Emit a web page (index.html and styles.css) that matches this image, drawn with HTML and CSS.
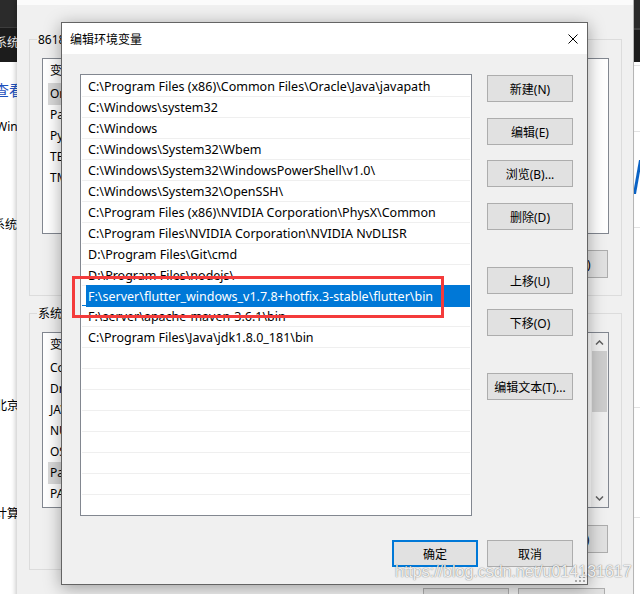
FILE: index.html
```html
<!DOCTYPE html>
<html lang="zh-CN">
<head>
<meta charset="utf-8">
<title>编辑环境变量</title>
<link rel="stylesheet" href="styles.css">
</head>
<body>
<div class="win-left">
  <div class="wl-title"><span>系统</span></div>
  <div class="wl-body">
    <div class="wl-link">查看有关计算机的基本信息</div>
    <div class="wl-text wl-win">Windows 版本</div>
    <div class="wl-text wl-sys">系统</div>
    <div class="wl-text wl-bj">北京</div>
    <div class="wl-text wl-js">计算机名</div>
  </div>
</div>

<div class="win-right">
  <div class="wr-title"></div>
  <div class="wr-line wr-l1"></div>
  <div class="wr-line wr-l2"></div>
  <svg class="wr-logo" width="8" height="34" viewBox="0 0 8 34"><polygon points="5,0 8,0 2,34 -1,34" fill="#0b63c5"/></svg>
  <div class="wr-line wr-l3"></div>
  <div class="wr-line wr-l4"></div>
  <div class="wr-line wr-l5"></div>
</div>

<div class="win-env">
  <div class="env-cap"></div>
  <div class="env-body">
    <div class="group g1">
      <div class="group-label">86180 的用户变量(U)</div>
      <div class="vlist">
        <div class="vhead">变量</div>
        <div class="vrow sel"><span>OneDrive</span></div>
        <div class="vrow"><span>Path</span></div>
        <div class="vrow"><span>PyCharm</span></div>
        <div class="vrow"><span>TEMP</span></div>
        <div class="vrow"><span>TMP</span></div>
      </div>
      <div class="gbtns g1-btns">
        <button class="gbtn">新建(N)...</button>
        <button class="gbtn">编辑(E)...</button>
        <button class="gbtn">删除(D)</button>
      </div>
    </div>
    <div class="group g2">
      <div class="group-label">系统变量(S)</div>
      <div class="vlist l2">
        <div class="vcol">
          <div class="vhead">变量</div>
          <div class="vrow"><span>ComSpec</span></div>
          <div class="vrow"><span>DriverData</span></div>
          <div class="vrow"><span>JAVA_HOME</span></div>
          <div class="vrow"><span>NUMBER_OF_PROCESSORS</span></div>
          <div class="vrow"><span>OS</span></div>
          <div class="vrow sel"><span>Path</span></div>
          <div class="vrow"><span>PATHEXT</span></div>
        </div>
        <div class="vscroll">
          <div class="sb-arrow"><svg width="9" height="5" viewBox="0 0 9 5"><path d="M1 4.5 L4.5 1 L8 4.5" fill="none" stroke="#606060" stroke-width="1.5"/></svg></div>
          <div class="sb-thumb"></div>
          <div class="sb-track"></div>
          <div class="sb-arrow"><svg width="9" height="5" viewBox="0 0 9 5"><path d="M1 0.5 L4.5 4 L8 0.5" fill="none" stroke="#606060" stroke-width="1.5"/></svg></div>
        </div>
      </div>
      <div class="gbtns g2-btns">
        <button class="gbtn">新建(W)...</button>
        <button class="gbtn">编辑(I)...</button>
        <button class="gbtn">删除(L)</button>
      </div>
    </div>
    <div class="env-foot">
      <button class="gbtn fbtn">确定</button>
      <button class="gbtn fbtn fbtn2">取消</button>
    </div>
  </div>
</div>

<div class="dlg">
  <div class="dlg-title">
    <span>编辑环境变量</span>
    <svg class="close" width="10" height="10" viewBox="0 0 10 10"><path d="M0.5 0.5 L9.5 9.5 M9.5 0.5 L0.5 9.5" stroke="#000" stroke-width="1"/></svg>
  </div>
  <div class="dlg-body">
    <div class="dlg-main">
      <div class="plist">
        <div class="prow"><div class="pt">C:\Program Files (x86)\Common Files\Oracle\Java\javapath</div></div>
        <div class="prow"><div class="pt">C:\Windows\system32</div></div>
        <div class="prow"><div class="pt">C:\Windows</div></div>
        <div class="prow"><div class="pt">C:\Windows\System32\Wbem</div></div>
        <div class="prow"><div class="pt">C:\Windows\System32\WindowsPowerShell\v1.0\</div></div>
        <div class="prow"><div class="pt">C:\Windows\System32\OpenSSH\</div></div>
        <div class="prow"><div class="pt">C:\Program Files (x86)\NVIDIA Corporation\PhysX\Common</div></div>
        <div class="prow"><div class="pt">C:\Program Files\NVIDIA Corporation\NVIDIA NvDLISR</div></div>
        <div class="prow"><div class="pt">D:\Program Files\Git\cmd</div></div>
        <div class="prow"><div class="pt">D:\Program Files\nodejs\</div></div>
        <div class="prow sel"><div class="pt">F:\server\flutter_windows_v1.7.8+hotfix.3-stable\flutter\bin</div></div>
        <div class="prow"><div class="pt">F:\server\apache-maven-3.6.1\bin</div></div>
        <div class="prow"><div class="pt">C:\Program Files\Java\jdk1.8.0_181\bin</div></div>
        <div class="prow"><div class="pt"></div></div>
        <div class="prow"><div class="pt"></div></div>
        <div class="prow"><div class="pt"></div></div>
        <div class="prow"><div class="pt"></div></div>
        <div class="prow"><div class="pt"></div></div>
        <div class="prow"><div class="pt"></div></div>
        <div class="prow"><div class="pt"></div></div>
        <div class="prow"><div class="pt"></div></div>
      </div>
      <div class="side">
        <button class="btn b-first">新建(N)</button>
        <button class="btn b-16">编辑(E)</button>
        <button class="btn b-15">浏览(B)...</button>
        <button class="btn b-16">删除(D)</button>
        <button class="btn b-37">上移(U)</button>
        <button class="btn b-15">下移(O)</button>
        <button class="btn b-37">编辑文本(T)...</button>
      </div>
    </div>
    <div class="dlg-foot">
      <button class="btn ok">确定</button>
      <button class="btn">取消</button>
    </div>
  </div>
  <svg class="grip" width="10" height="10" viewBox="0 0 10 10">
    <rect x="8" y="0" width="2" height="2" fill="#a8a8a8"/>
    <rect x="8" y="4" width="2" height="2" fill="#a8a8a8"/>
    <rect x="4" y="4" width="2" height="2" fill="#a8a8a8"/>
    <rect x="8" y="8" width="2" height="2" fill="#a8a8a8"/>
    <rect x="4" y="8" width="2" height="2" fill="#a8a8a8"/>
    <rect x="0" y="8" width="2" height="2" fill="#a8a8a8"/>
  </svg>
</div>

<div class="mark"></div>
<div class="wm">https://blog.csdn.net/u014131617</div>
</body>
</html>
```

FILE: styles.css
```css
* { box-sizing: border-box; }
html, body { margin: 0; padding: 0; }
body {
  width: 640px;
  height: 594px;
  overflow: hidden;
  position: relative;
  background: #f0f0f0;
  font-family: "Noto Sans", "Noto Sans CJK SC", sans-serif;
  font-size: 12px;
  color: #000;
}
button {
  font-family: inherit;
  font-size: 12px;
  color: #000;
  padding: 0;
  margin: 0;
}

/* left background window */
.win-left {
  position: absolute;
  left: -183px;
  top: 0;
  width: 200px;
  height: 594px;
  background: #fff;
  overflow: hidden;
  white-space: nowrap;
}
.wl-title {
  height: 62px;
  background: linear-gradient(#2b2b2b 0 27px, #3d3d3d 27px 28px, #1c1c1c 28px);
  color: #e8e8e8;
  padding: 35px 0 0 178px;
  line-height: 16px;
}
.wl-body { padding-left: 177px; }
.wl-link {
  margin-top: 18px;
  font-size: 15px;
  line-height: 20px;
  color: #1f52bd;
}
.wl-text { line-height: 18px; }
.wl-win { margin-top: 18px; margin-left: 2px; }
.wl-sys { margin-top: 80px; margin-left: -1px; }
.wl-bj { margin-top: 163px; margin-left: 1px; }
.wl-js { margin-top: 90px; margin-left: 1px; }

/* right background window */
.win-right {
  position: absolute;
  left: 633px;
  top: 0;
  width: 200px;
  height: 594px;
  background: #fff;
  border-left: 1px solid #b9b9b9;
  box-shadow: -4px 0 6px rgba(0, 0, 0, 0.06);
}
.wr-title {
  height: 62px;
  background: linear-gradient(#2b2b2b 0 28px, #404040 28px 30px, #1c1c1c 30px);
}
.wr-line { border-top: 1px solid #e3e3e3; }
.wr-l1 { margin-top: 3px; }
.wr-l2 { margin-top: 65px; }
.wr-logo { display: block; margin-top: 28px; }
.wr-l3 { margin-top: 33px; }
.wr-l4 { margin-top: 179px; }
.wr-l5 { margin-top: 109px; }

/* environment variables window (behind) */
.win-env {
  position: absolute;
  left: 17px;
  top: 0;
  width: 616px;
  height: 620px;
  background: #f0f0f0;
  box-shadow: -2px 0 4px rgba(0, 0, 0, 0.18);
  white-space: nowrap;
}
.env-cap { height: 5px; background: #fbfbfb; }
.env-body { padding: 0 11px 0 12px; }
.group {
  border: 1px solid #dcdcdc;
  padding: 0 12px 16px;
}
.g1 { margin-top: 34px; padding-bottom: 17px; }
.g2 { margin-top: 17px; }
.group-label {
  width: max-content;
  margin: -9px 0 0 -5px;
  padding: 0 1px;
  background: #f0f0f0;
  line-height: 17px;
}
.vlist {
  margin-top: 10px;
  height: 176px;
  background: #fff;
  border: 1px solid #828790;
  overflow: hidden;
}
.vhead {
  height: 24px;
  padding: 2px 0 0 7px;
  line-height: 20px;
}
.vrow {
  height: 21px;
  line-height: 21px;
  padding-left: 5px;
}
.vrow span { display: block; width: 180px; padding-left: 2px; }
.vrow.sel span { background: #d9d9d9; height: 22px; }
.l2 { display: flex; }
.vcol { flex: 1; }
.vscroll {
  width: 17px;
  background: #f0f0f0;
  display: flex;
  flex-direction: column;
}
.sb-arrow {
  height: 18px;
  display: flex;
  align-items: center;
  justify-content: center;
}
.sb-thumb { height: 61px; margin: 0 1px; background: #cdcdcd; }
.sb-track { flex: 1; }
.gbtns {
  display: flex;
  justify-content: flex-end;
  gap: 10px;
  padding-right: 1px;
}
.g1-btns { margin-top: 16px; }
.g2-btns { margin-top: 17px; }
.gbtn {
  width: 75px;
  height: 28px;
  border: 1px solid #adadad;
  background: #e1e1e1;
}
.env-foot {
  display: flex;
  justify-content: flex-end;
  gap: 9px;
  margin-top: 18px;
  padding-right: 17px;
}
.fbtn { width: 86px; }
.fbtn2 { width: 87px; }

/* front dialog */
.dlg {
  position: absolute;
  left: 61px;
  top: 22px;
  width: 527px;
  height: 563px;
  background: #f0f0f0;
  border: 1px solid #646464;
  box-shadow: 0 3px 16px rgba(0, 0, 0, 0.35);
  display: flex;
  flex-direction: column;
}
.dlg-title {
  height: 31px;
  flex: none;
  background: #fff;
  display: flex;
  align-items: center;
  padding-left: 8px;
}
.close { margin-left: auto; margin-right: 9px; }
.dlg-body {
  flex: 1;
  padding: 20px 14px 17px 18px;
  display: flex;
  flex-direction: column;
}
.dlg-main { display: flex; gap: 15px; }
.plist {
  width: 392px;
  height: 442px;
  flex: none;
  background: #fff;
  border: 1px solid #828790;
  padding-top: 1px;
  overflow: hidden;
}
.prow {
  height: 21px;
  border-bottom: 1px solid #efefef;
  margin: 0 1px;
  padding-left: 4px;
}
.pt {
  height: 20px;
  line-height: 20px;
  padding: 1px 0 0 2px;
  white-space: nowrap;
  font-size: 12.5px;
}
.prow.sel { border-bottom-color: #0078d7; }
.prow.sel .pt {
  background: #0078d7;
  color: #fff;
  height: 22px;
  margin-top: -1px;
  padding-top: 2px;
}
.side { display: flex; flex-direction: column; width: 86px; }
.btn {
  width: 86px;
  height: 27px;
  flex: none;
  border: 1px solid #adadad;
  background: #e1e1e1;
}
.b-first { margin-top: 1px; }
.b-15 { margin-top: 15px; }
.b-16 { margin-top: 16px; }
.b-37 { margin-top: 37px; }
.dlg-foot {
  display: flex;
  justify-content: flex-end;
  gap: 9px;
  margin-top: 24px;
}
.ok { border: 2px solid #0078d7; }
.grip { position: absolute; right: 2px; bottom: 2px; }

/* annotation overlays */
.mark {
  position: absolute;
  left: 72px;
  top: 276px;
  width: 372px;
  height: 42px;
  border: 3px solid #f43b3b;
}
.wm {
  position: absolute;
  left: 395px;
  top: 564px;
  font-family: "Liberation Sans", sans-serif;
  font-size: 16px;
  line-height: 16px;
  color: rgba(255, 255, 255, 0.9);
  text-shadow: 0 0 1px rgba(0, 0, 0, 0.5), 0 0 2px rgba(0, 0, 0, 0.2);
  white-space: nowrap;
}
```
